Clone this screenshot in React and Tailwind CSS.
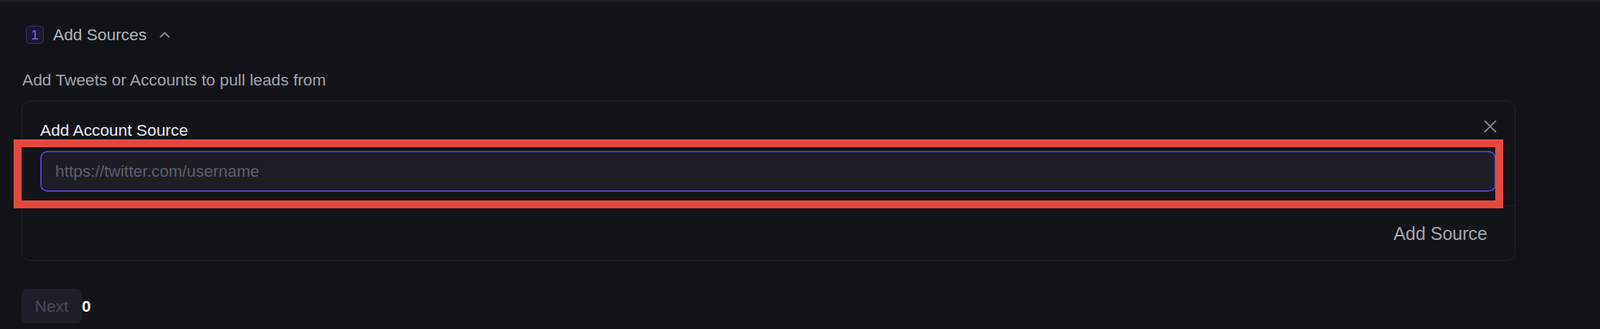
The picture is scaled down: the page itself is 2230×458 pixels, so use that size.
export default function App() {
  return (
    <div className="h-[458px] w-full overflow-hidden bg-[#131419] border-t-[3px] border-[#1f2028] pl-[30px] pt-[33px] font-['Liberation_Sans',Arial,sans-serif] text-[22.75px] leading-[25px]">
      {/* Step header */}
      <div className="flex h-[25px] items-center pl-[6px]">
        <div className="flex h-[25px] w-[25px] items-center justify-center rounded-[5px] border border-[#3a2f70] bg-[#1c1830] text-[19px] leading-none text-[#7a5ff0]">
          1
        </div>
        <span className="ml-[13px] text-[#b3b3bd]">Add Sources</span>
        <svg className="ml-[18px]" width="15" height="9" viewBox="0 0 15 9" fill="none">
          <polyline points="1.5,7.5 7.5,1.5 13.5,7.5" stroke="#8b8b96" strokeWidth="1.8" strokeLinecap="round" strokeLinejoin="round" />
        </svg>
      </div>

      {/* Description */}
      <p className="mt-[38px] pl-[1px] text-[#a2a2ad]">Add Tweets or Accounts to pull leads from</p>

      {/* Card */}
      <div className="relative mt-[16px] w-[2082px] rounded-[12px] border border-[#24252d]">
        <button className="absolute right-[25px] top-[26px] text-[#85858f]" aria-label="Close">
          <svg width="18" height="18" viewBox="0 0 18 18" fill="none">
            <path d="M1.5 1.5 L16.5 16.5 M16.5 1.5 L1.5 16.5" stroke="#85858f" strokeWidth="1.8" strokeLinecap="round" />
          </svg>
        </button>
        <div className="pb-[19px] pl-[25px] pr-[26px] pt-[28px]">
          <div className="h-[25px] font-medium text-[#ededf1]">Add Account Source</div>
          <div className="relative mt-[16px]">
            <input
              readOnly
              placeholder="https://twitter.com/username"
              className="block h-[57px] w-full rounded-[10px] border-2 border-[#5a3ec2] bg-[#1d1e26] pl-[19px] text-[22.75px] text-[#d0d0d8] outline-none placeholder:text-[#5c5d68]"
            />
            <div className="pointer-events-none absolute left-[-37px] top-[-16px] h-[96px] w-[2076px] border-[11px] border-[#e5483e]" />
          </div>
        </div>
        <div className="flex h-[76px] items-start justify-end border-t border-[#24252d] pr-[38px] pt-[25px]">
          <span className="text-[25px] leading-[26px] text-[#a6a6af]">Add Source</span>
        </div>
      </div>

      {/* Footer */}
      <div className="mt-[39px] flex items-center">
        <button className="flex h-[48px] w-[84px] items-center justify-center rounded-[8px] bg-[#1f1f29] text-[22.75px] text-[#4a4b56]">
          Next
        </button>
        <span className="font-semibold text-[#f2f2f2]">0</span>
      </div>
    </div>
  );
}
